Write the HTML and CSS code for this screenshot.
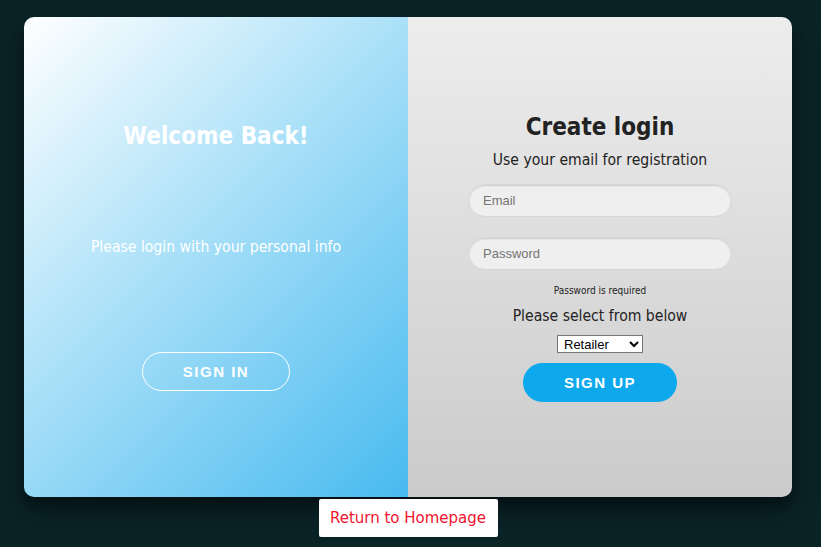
FILE: index.html
```html
<!DOCTYPE html>
<html>
<head>
<meta charset="utf-8">
<link rel="stylesheet" href="styles.css">
</head>
<body>
<div class="page">
  <div class="card">
    <div class="panel left">
      <h1 class="welcome">Welcome Back!</h1>
      <p class="info">Please login with your personal info</p>
      <button class="btn ghost">SIGN IN</button>
    </div>
    <div class="panel right">
      <h1 class="title">Create login</h1>
      <p class="sub">Use your email for registration</p>
      <input class="field" type="text" placeholder="Email">
      <input class="field pw" type="password" placeholder="Password">
      <p class="err">Password is required</p>
      <p class="sel-label">Please select from below</p>
      <select class="sel"><option>Retailer</option><option>Customer</option></select>
      <button class="btn solid">SIGN UP</button>
    </div>
  </div>
  <a class="home" href="#">Return to Homepage</a>
</div>
</body>
</html>
```
FILE: styles.css
```css
html, body {
  margin: 0;
  padding: 0;
  background: #0a2327;
  height: 100%;
}
body {
  font-family: "DejaVu Sans Condensed", "DejaVu Sans", Tahoma, sans-serif;
  font-stretch: condensed;
}
.page {
  padding: 17px 0 0 24px;
  width: 768px;
  display: flex;
  flex-direction: column;
  align-items: center;
}
.card {
  width: 768px;
  height: 480px;
  border-radius: 10px;
  overflow: hidden;
  display: flex;
  box-shadow: 0 14px 28px rgba(0,0,0,0.3), 0 10px 10px rgba(0,0,0,0.25);
}
.panel {
  width: 384px;
  height: 100%;
  display: flex;
  flex-direction: column;
  align-items: center;
  box-sizing: border-box;
}
.left {
  background: linear-gradient(135deg, #ffffff 0%, #a9e0f8 45%, #48baef 100%);
  color: #fff;
  padding-top: 105px;
}
.welcome {
  margin: 0;
  font-size: 24px;
  font-weight: bold;
  line-height: 28px;
}
.info {
  margin: 88px 0 0;
  font-size: 15.6px;
  line-height: 18px;
}
.btn {
  font-family: "Liberation Sans", Arial, sans-serif;
  font-stretch: normal;
  font-weight: bold;
  font-size: 15px;
  letter-spacing: 1.5px;
  border-radius: 20px;
  height: 39px;
  cursor: pointer;
}
.ghost {
  margin-top: 96px;
  width: 148px;
  background: transparent;
  border: 1px solid #fff;
  color: #fff;
}
.right {
  background: linear-gradient(180deg, #ededed 0%, #cbcbcb 100%);
  color: #222;
  padding-top: 96px;
}
.title {
  margin: 0;
  font-size: 24px;
  font-weight: bold;
  line-height: 28px;
}
.sub {
  margin: 10px 0 0;
  font-size: 15.6px;
  line-height: 18px;
}
.field {
  margin-top: 15px;
  width: 264px;
  height: 33px;
  box-sizing: border-box;
  border-radius: 17px;
  border: 1px solid #d6d6d6;
  background: #efefef;
  box-shadow: inset 0 1px 2px rgba(0,0,0,0.15);
  padding: 0 14px;
  font-family: "Liberation Sans", Arial, sans-serif;
  font-stretch: normal;
  font-size: 13px;
  color: #333;
  outline: none;
}
.field::placeholder { color: #757575; }
.pw { margin-top: 20px; }
.err {
  margin: 15px 0 0;
  font-size: 10px;
  line-height: 12px;
}
.sel-label {
  margin: 10px 0 0;
  font-size: 15.6px;
  line-height: 18px;
}
.sel {
  margin-top: 10px;
  width: 86px;
  height: 18px;
  font-family: "Liberation Sans", Arial, sans-serif;
  font-stretch: normal;
  font-size: 13px;
  border: 1px solid #767676;
  border-radius: 0;
  background: #fff;
  color: #000;
  padding: 0 2px;
}
.solid {
  margin-top: 10px;
  width: 154px;
  background: #0ea8ec;
  border: none;
  color: #fff;
}
.home {
  margin-top: 2px;
  width: 179px;
  height: 38px;
  box-sizing: border-box;
  background: #fff;
  border-radius: 2px;
  color: #f0142f;
  font-family: "DejaVu Sans", Tahoma, sans-serif;
  font-stretch: normal;
  font-size: 15px;
  text-decoration: none;
  display: flex;
  align-items: center;
  justify-content: center;
}
```
